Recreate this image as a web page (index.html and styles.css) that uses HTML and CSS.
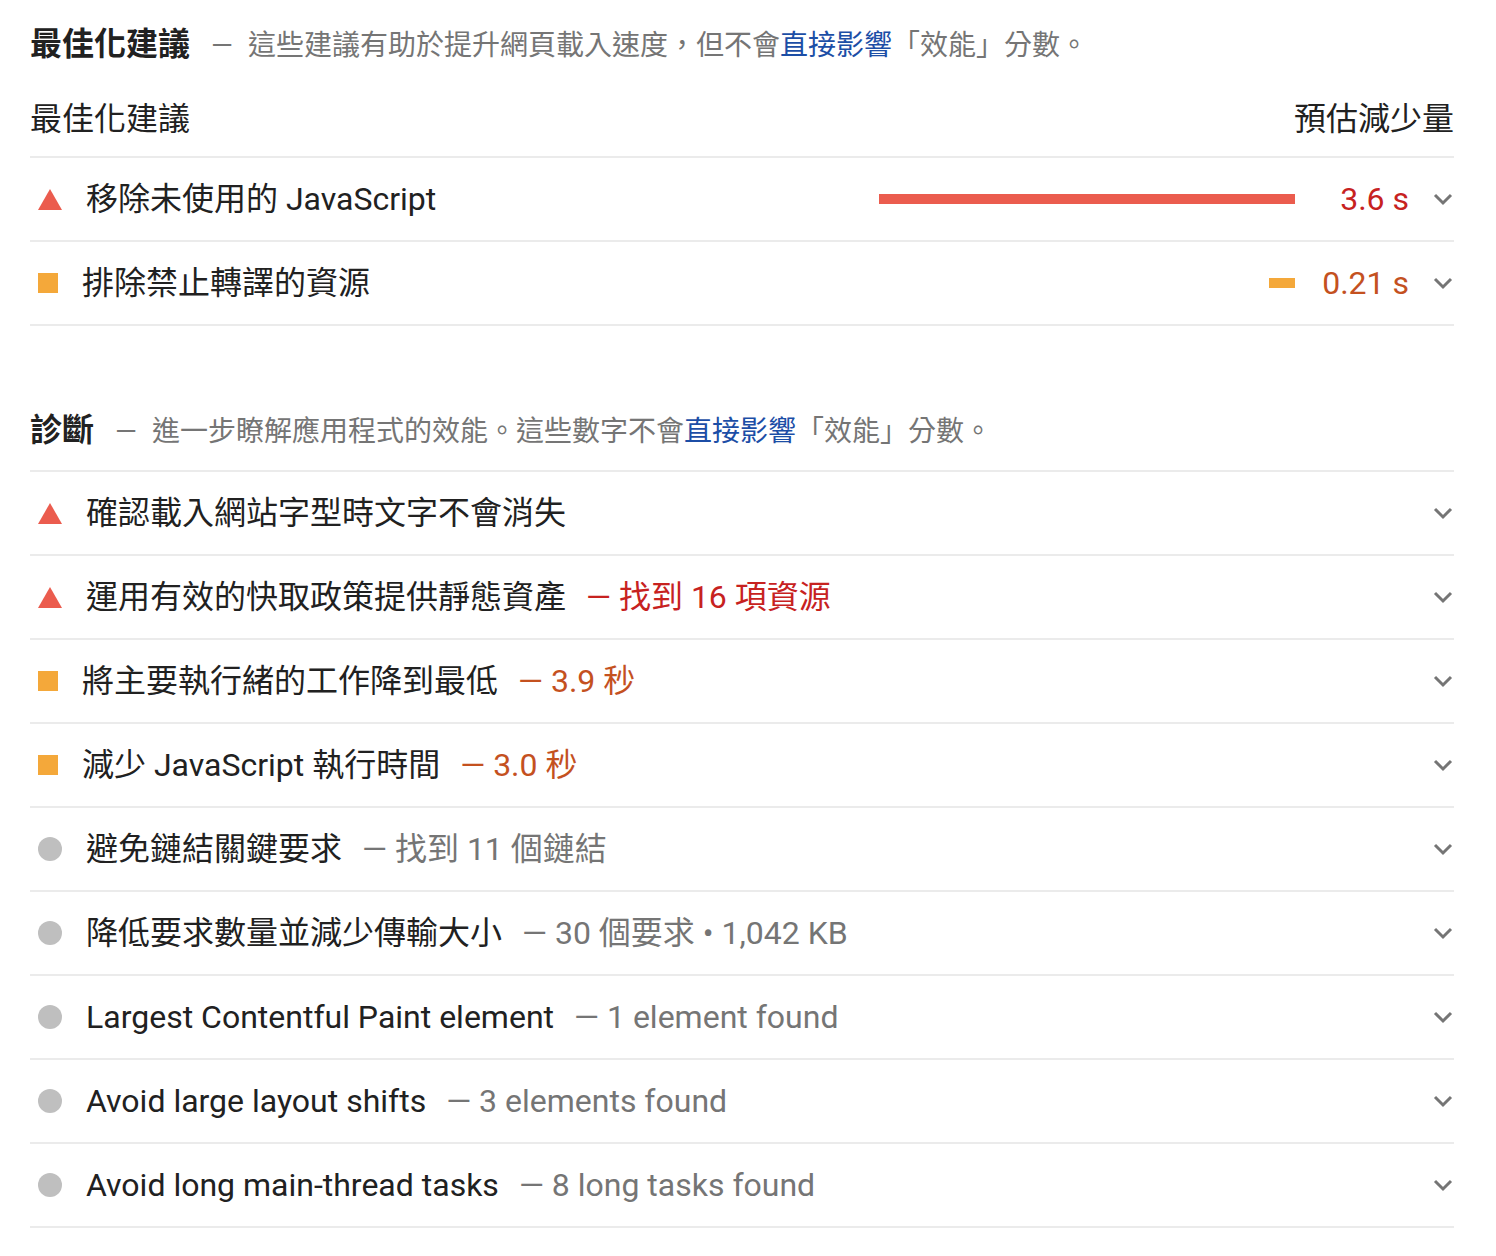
FILE: index.html
```html
<!DOCTYPE html>
<html lang="zh-Hant">
<head>
<meta charset="utf-8">
<title>Lighthouse</title>
<link rel="stylesheet" href="styles.css">
</head>
<body>
<div class="report">
  <div class="group-header">
    <span class="group-title">最佳化建議</span>
    <span class="group-desc"><span class="dash">—</span>這些建議有助於提升網頁載入速度，但不會<a class="link" href="#">直接影響</a>「效能」分數。</span>
  </div>
  <div class="cols">
    <span>最佳化建議</span>
    <span>預估減少量</span>
  </div>

  <div class="audit">
    <span class="icon fail"></span>
    <span class="title">移除未使用的 JavaScript</span>
    <span class="spark"><span class="bar bar-fail" style="width:416px"></span></span>
    <span class="value v-fail">3.6 s</span>
    <span class="chev"><svg width="22" height="14" viewBox="0 0 22 14"><polyline points="3,3 11,11 19,3" fill="none" stroke="#757575" stroke-width="3"/></svg></span>
  </div>
  <div class="audit">
    <span class="icon avg"></span>
    <span class="title">排除禁止轉譯的資源</span>
    <span class="spark"><span class="bar bar-avg" style="width:26px"></span></span>
    <span class="value v-avg">0.21 s</span>
    <span class="chev"><svg width="22" height="14" viewBox="0 0 22 14"><polyline points="3,3 11,11 19,3" fill="none" stroke="#757575" stroke-width="3"/></svg></span>
  </div>

  <div class="group-header diag">
    <span class="group-title">診斷</span>
    <span class="group-desc"><span class="dash">—</span>進一步瞭解應用程式的效能。這些數字不會<a class="link" href="#">直接影響</a>「效能」分數。</span>
  </div>

  <div class="audit">
    <span class="icon fail"></span>
    <span class="title">確認載入網站字型時文字不會消失</span>
    <span class="chev"><svg width="22" height="14" viewBox="0 0 22 14"><polyline points="3,3 11,11 19,3" fill="none" stroke="#757575" stroke-width="3"/></svg></span>
  </div>
  <div class="audit">
    <span class="icon fail"></span>
    <span class="title">運用有效的快取政策提供靜態資產<span class="disp d-fail">— 找到 16 項資源</span></span>
    <span class="chev"><svg width="22" height="14" viewBox="0 0 22 14"><polyline points="3,3 11,11 19,3" fill="none" stroke="#757575" stroke-width="3"/></svg></span>
  </div>
  <div class="audit">
    <span class="icon avg"></span>
    <span class="title">將主要執行緒的工作降到最低<span class="disp d-avg">— 3.9 秒</span></span>
    <span class="chev"><svg width="22" height="14" viewBox="0 0 22 14"><polyline points="3,3 11,11 19,3" fill="none" stroke="#757575" stroke-width="3"/></svg></span>
  </div>
  <div class="audit">
    <span class="icon avg"></span>
    <span class="title">減少 JavaScript 執行時間<span class="disp d-avg">— 3.0 秒</span></span>
    <span class="chev"><svg width="22" height="14" viewBox="0 0 22 14"><polyline points="3,3 11,11 19,3" fill="none" stroke="#757575" stroke-width="3"/></svg></span>
  </div>
  <div class="audit">
    <span class="icon info"></span>
    <span class="title">避免鏈結關鍵要求<span class="disp">— 找到 11 個鏈結</span></span>
    <span class="chev"><svg width="22" height="14" viewBox="0 0 22 14"><polyline points="3,3 11,11 19,3" fill="none" stroke="#757575" stroke-width="3"/></svg></span>
  </div>
  <div class="audit">
    <span class="icon info"></span>
    <span class="title">降低要求數量並減少傳輸大小<span class="disp">— 30 個要求 • 1,042 KB</span></span>
    <span class="chev"><svg width="22" height="14" viewBox="0 0 22 14"><polyline points="3,3 11,11 19,3" fill="none" stroke="#757575" stroke-width="3"/></svg></span>
  </div>
  <div class="audit">
    <span class="icon info"></span>
    <span class="title">Largest Contentful Paint element<span class="disp">— 1 element found</span></span>
    <span class="chev"><svg width="22" height="14" viewBox="0 0 22 14"><polyline points="3,3 11,11 19,3" fill="none" stroke="#757575" stroke-width="3"/></svg></span>
  </div>
  <div class="audit">
    <span class="icon info"></span>
    <span class="title">Avoid large layout shifts<span class="disp">— 3 elements found</span></span>
    <span class="chev"><svg width="22" height="14" viewBox="0 0 22 14"><polyline points="3,3 11,11 19,3" fill="none" stroke="#757575" stroke-width="3"/></svg></span>
  </div>
  <div class="audit">
    <span class="icon info"></span>
    <span class="title">Avoid long main-thread tasks<span class="disp">— 8 long tasks found</span></span>
    <span class="chev"><svg width="22" height="14" viewBox="0 0 22 14"><polyline points="3,3 11,11 19,3" fill="none" stroke="#757575" stroke-width="3"/></svg></span>
  </div>
</div>
</body>
</html>
```

FILE: styles.css
```css
html, body {
  margin: 0;
  padding: 0;
  background: #ffffff;
}

body {
  font-family: Roboto, "Noto Sans CJK TC", sans-serif;
  color: #212121;
}

.report {
  padding: 0 42px 0 30px;
}

.group-header {
  display: flex;
  align-items: baseline;
  padding-top: 24px;
  line-height: 40px;
}

.group-header.diag {
  padding-top: 0;
  margin-top: 84px;
  padding-bottom: 18px;
  border-bottom: 2px solid #ebebeb;
}

.group-title {
  font-size: 32px;
  font-weight: 700;
  color: #212121;
}

.group-desc {
  font-size: 28px;
  color: #757575;
  margin-left: 21px;
}

.dash {
  margin-right: 15px;
}

.link {
  color: #1c4ea6;
  text-decoration: none;
}

.cols {
  display: flex;
  justify-content: space-between;
  margin-top: 33px;
  padding-bottom: 17px;
  border-bottom: 2px solid #ebebeb;
  font-size: 32px;
  line-height: 40px;
}

.audit {
  display: flex;
  align-items: center;
  height: 82px;
  border-bottom: 2px solid #ebebeb;
  font-size: 32px;
  line-height: 40px;
}

.icon {
  flex: none;
  margin-left: 8px;
  margin-right: 24px;
}

.icon.fail {
  width: 0;
  height: 0;
  border-left: 12px solid transparent;
  border-right: 12px solid transparent;
  border-bottom: 21px solid #eb5c4e;
}

.icon.avg {
  width: 20px;
  height: 20px;
  background: #f4a83a;
}

.icon.info {
  width: 24px;
  height: 24px;
  border-radius: 50%;
  background: #bfbfbf;
}

.title {
  flex: 1;
  white-space: nowrap;
}

.disp {
  margin-left: 20px;
  color: #757575;
}

.disp.d-fail {
  color: #c7221f;
}

.disp.d-avg {
  color: #c4511f;
}

.spark {
  flex: none;
  width: 416px;
  display: flex;
  justify-content: flex-end;
}

.bar {
  display: block;
  height: 10px;
}

.bar-fail {
  background: #eb5c4e;
}

.bar-avg {
  background: #f4a83a;
}

.value {
  flex: none;
  width: 114px;
  text-align: right;
}

.v-fail {
  color: #c7221f;
}

.v-avg {
  color: #c4511f;
}

.chev {
  flex: none;
  margin-left: 23px;
  display: flex;
  align-items: center;
}
```
